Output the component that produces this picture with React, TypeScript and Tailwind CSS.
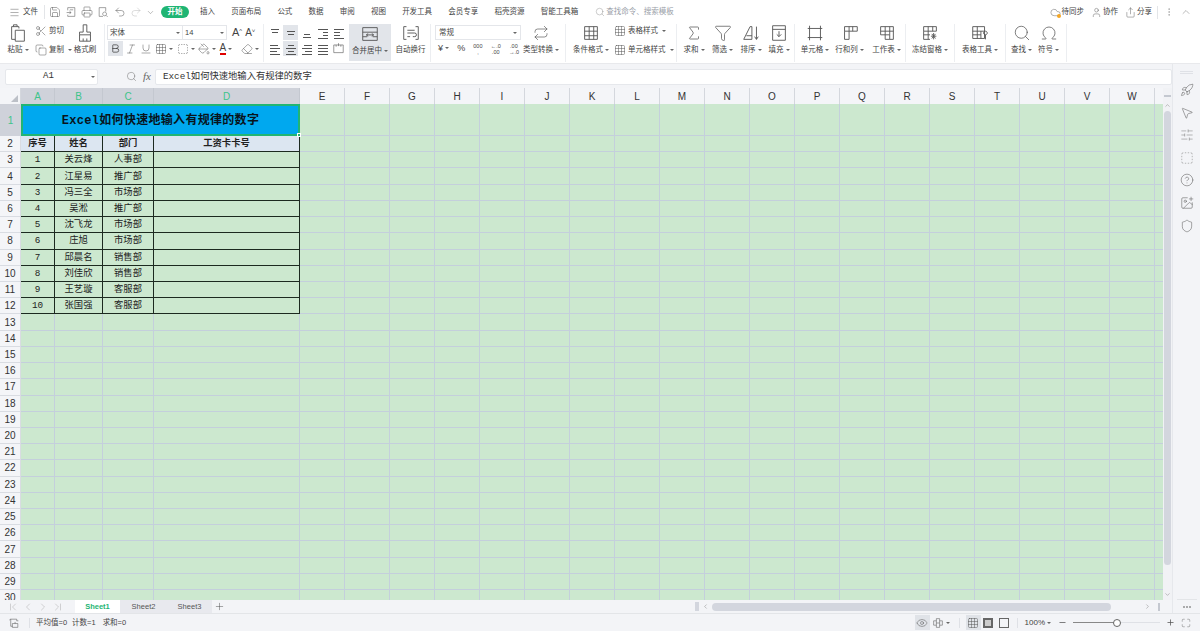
import {
  Bold,
  ChevronDown,
  ChevronFirst,
  ChevronLast,
  ChevronLeft,
  ChevronRight,
  ChevronUp,
  CircleHelp,
  Cloud,
  Copy,
  Eraser,
  Eye,
  Filter,
  Grid3x3,
  ImagePlus,
  Italic,
  Maximize,
  Menu,
  Minus,
  MoreVertical,
  MousePointer2,
  Omega,
  PaintBucket,
  Plus,
  Printer,
  Redo2,
  Repeat,
  Rocket,
  Save,
  Scissors,
  Search,
  Shield,
  Sigma,
  SlidersHorizontal,
  SquareDashed,
  Underline,
  Undo2,
  User,
  Share,
} from "lucide-react";
import type { ReactNode } from "react";

const cjk = "font-['Liberation_Sans','Noto_Sans_CJK_SC',sans-serif]";
const cellFont = "font-['Liberation_Mono','Noto_Sans_CJK_SC',monospace]";

const tabs = ["插入", "页面布局", "公式", "数据", "审阅", "视图", "开发工具", "会员专享", "稻壳资源", "智能工具箱"];
const people = [
  ["1", "关云烽", "人事部"],
  ["2", "江星易", "推广部"],
  ["3", "冯三全", "市场部"],
  ["4", "吴淞", "推广部"],
  ["5", "沈飞龙", "市场部"],
  ["6", "庄旭", "市场部"],
  ["7", "邱晨名", "销售部"],
  ["8", "刘佳欣", "销售部"],
  ["9", "王艺璇", "客服部"],
  ["10", "张国强", "客服部"],
];
const freeCols = "EFGHIJKLMNOPQRSTUVW".split("");
const emptyRows = Array.from({ length: 18 }, (_, i) => i + 13);

// 对齐按钮用的几条横线
function Lines({ rows }: { rows: [number, number, number][] }) {
  return (
    <svg width="14" height="14" viewBox="0 0 14 14" stroke="#555" strokeWidth="1" fill="none">
      {rows.map(([y, a, b]) => (
        <path key={y} d={`M${a} ${y}.5H${b}`} />
      ))}
    </svg>
  );
}

// 表格类图标
function TableIcon({ size = 20, d }: { size?: number; d: string }) {
  return (
    <svg width={size} height={size} viewBox="0 0 22 22" stroke="#555" strokeWidth="1" fill="none">
      <path d={d} />
    </svg>
  );
}

function Caret() {
  return <span className="ml-[2px] inline-block h-0 w-0 border-x-[2px] border-t-[2px] border-x-transparent border-t-[#666] align-middle" />;
}

function Big({ icon, label, className, active, noCaret }: { icon: ReactNode; label: string; className: string; active?: boolean; noCaret?: boolean }) {
  return (
    <div className={`flex h-[37px] shrink-0 flex-col items-center ${active ? "bg-[#e2e5ea]" : ""} ${className}`}>
      <div className="flex h-[18px] items-center">{icon}</div>
      <div className="mt-[1px] flex h-[14px] items-center whitespace-nowrap text-[7.5px]">
        {label}
        {!noCaret && <Caret />}
      </div>
    </div>
  );
}

function Sep() {
  return <div className="h-[38px] w-px shrink-0 bg-[#eceef1]" />;
}

function IconBtn({ children, active }: { children: ReactNode; active?: boolean }) {
  return <div className={`flex h-[15px] w-[15px] items-center justify-center ${active ? "bg-[#e2e5ea]" : ""}`}>{children}</div>;
}

function Stacked({ top, bottom }: { top: string; bottom: string }) {
  return (
    <span className="flex flex-col items-center font-['Liberation_Sans',sans-serif] text-[5.5px] leading-[6px]">
      <span>{top}</span>
      <span>{bottom}</span>
    </span>
  );
}

const ico = { size: 12, strokeWidth: 1, color: "#555" };

function TitleBar() {
  return (
    <div className="flex h-[24px] items-center bg-white text-[7.5px] text-[#444]">
      <Menu size={11} strokeWidth={1} className="ml-[9px]" color="#555" />
      <span className="ml-[3px] w-[16px]">文件</span>
      <div className="ml-[5px] h-[14px] w-px bg-[#e3e5e8]" />
      <div className="ml-[3px] flex w-[108px] items-center justify-between px-[1px]">
        <Save {...ico} />
        <TableIcon size={12} d="M5 8V3h13v16H5v-3M3 12h8M8 9l3 3-3 3M9 7h6" />
        <Printer {...ico} />
        <TableIcon size={12} d="M16 10V3H4v16h7M14 11a3.500 3.500 0 1 1-.1 0M16.500 17l3 3" />
        <Undo2 {...ico} />
        <Redo2 {...ico} color="#bbb" />
        <ChevronDown size={9} strokeWidth={1} color="#555" />
      </div>
      <div className="ml-[5px] flex h-[12px] w-[28px] items-center justify-center rounded-full bg-[#1fb573] text-[7.5px] font-bold text-white">开始</div>
      <div className="ml-[11px] flex gap-[16.2px]">
        {tabs.map((t) => (
          <span key={t} className="whitespace-nowrap">{t}</span>
        ))}
      </div>
      <div className="ml-[17px] flex items-center gap-[1px] text-[#9aa0a8]">
        <Search size={10} strokeWidth={1} color="#888" />
        查找命令、搜索模板
      </div>
      <div className="ml-auto flex items-center">
        <div className="flex items-center gap-[1px]">
          <div className="relative">
            <Cloud size={11} strokeWidth={1} color="#555" />
            <div className="absolute right-0 bottom-0 h-[4px] w-[4px] rounded-full bg-[#f5a623]" />
          </div>
          待同步
        </div>
        <div className="ml-[7px] flex items-center gap-[1px]">
          <User size={11} strokeWidth={1} color="#555" />
          协作
        </div>
        <div className="ml-[7px] flex items-center gap-[1px]">
          <Share size={11} strokeWidth={1} color="#555" />
          分享
        </div>
        <div className="ml-[5px] h-[13px] w-px bg-[#e3e5e8]" />
        <MoreVertical size={10} strokeWidth={1} className="ml-[6px]" color="#777" />
        <ChevronUp size={12} strokeWidth={1} className="ml-[6px] mr-[8px]" color="#777" />
      </div>
    </div>
  );
}

function Ribbon() {
  return (
    <div className="flex h-[40px] items-start border-b border-[#e8e9ec] bg-white text-[7.5px] text-[#444]">
      {/* 剪贴板 */}
      <Big className="ml-[8px] w-[20px]" icon={<TableIcon d="M12 6V4H4v14h4M6 4V2h4v2M8 8h10v12H8z" />} label="粘贴" />
      <div className="ml-[7px] flex h-[33px] w-[34px] shrink-0 flex-col justify-between whitespace-nowrap py-[1px]">
        <div className="flex items-center gap-[2px]"><Scissors size={12} strokeWidth={1} color="#555" className="shrink-0" />剪切</div>
        <div className="flex items-center gap-[2px]"><Copy size={12} strokeWidth={1} color="#555" className="shrink-0" />复制<Caret /></div>
      </div>
      <Big className="ml-[2px] w-[28px]" noCaret icon={<TableIcon d="M9 2h4v8h4v3H5v-3h4zM5 13v7h12v-7M9 20v-3M13 20v-3" />} label="格式刷" />
      <div className="ml-[5px]"><Sep /></div>

      {/* 字体 */}
      <div className="ml-[2px] flex w-[156px] shrink-0 flex-col">
        <div className="flex h-[17px] items-center">
          <div className="flex h-[15px] w-[76px] items-center justify-between border border-[#e4e6ea] px-[2px]">宋体<Caret /></div>
          <div className="flex h-[15px] w-[44px] items-center justify-between border border-l-0 border-[#e4e6ea] px-[2px]">14<Caret /></div>
          <span className="ml-[5px] text-[11px]">A<sup className="text-[6px]">^</sup></span>
          <span className="ml-[3px] text-[10px]">A<sup className="text-[6px]">˅</sup></span>
        </div>
        <div className="flex items-center pl-[1px]">
          <IconBtn active><Bold size={11} strokeWidth={1.5} color="#333" /></IconBtn>
          <IconBtn><Italic {...ico} /></IconBtn>
          <IconBtn><Underline {...ico} /></IconBtn>
          <div className="ml-[2px] flex w-[21.5px] items-center"><Grid3x3 {...ico} /><Caret /></div>
          <div className="flex w-[21.5px] items-center"><SquareDashed {...ico} /><Caret /></div>
          <div className="flex w-[21.5px] items-center"><PaintBucket {...ico} /><Caret /></div>
          <div className="flex w-[21.5px] items-center">
            <span className="border-b-2 border-[#e00000] text-[10px] leading-[11px]">A</span>
            <Caret />
          </div>
          <div className="flex items-center"><Eraser {...ico} /><Caret /></div>
        </div>
      </div>
      <Sep />

      {/* 对齐 */}
      <div className="ml-[3px] grid w-[80px] shrink-0 grid-cols-5 gap-y-[1px] pt-[1px]">
        <IconBtn><Lines rows={[[3, 3, 11], [6, 4, 10]]} /></IconBtn>
        <IconBtn active><Lines rows={[[5, 3, 11], [8, 4, 10]]} /></IconBtn>
        <IconBtn><Lines rows={[[8, 4, 10], [11, 3, 11]]} /></IconBtn>
        <IconBtn><Lines rows={[[3, 2, 12], [6, 7, 12], [9, 7, 12], [12, 2, 12]]} /></IconBtn>
        <IconBtn><Lines rows={[[3, 2, 12], [6, 2, 8], [9, 2, 8], [12, 2, 12]]} /></IconBtn>
        <IconBtn><Lines rows={[[3, 2, 10], [6, 2, 12], [9, 2, 9], [12, 2, 12]]} /></IconBtn>
        <IconBtn active><Lines rows={[[3, 4, 10], [6, 2, 12], [9, 4, 10], [12, 2, 12]]} /></IconBtn>
        <IconBtn><Lines rows={[[3, 4, 12], [6, 2, 12], [9, 5, 12], [12, 2, 12]]} /></IconBtn>
        <IconBtn><Lines rows={[[3, 2, 12], [6, 2, 12], [9, 2, 12], [12, 2, 12]]} /></IconBtn>
        <IconBtn><TableIcon size={13} d="M3 5h16v13H3zM11 2v5M7 5v3M15 5v3" /></IconBtn>
      </div>
      <Big
        active
        className="ml-[2px] w-[42px] pt-[1px]"
        label="合并居中"
        icon={<TableIcon d="M3 4h16v14H3zM3 9h16M3 14h5M14 14h5M7 12h8M7 12l2-1.500M7 12l2 1.500M15 12l-2-1.500M15 12l-2 1.500" />}
      />
      <Big
        className="w-[39px]"
        noCaret
        label="自动换行"
        icon={<TableIcon d="M6 4H3v14h3M16 4h3v14h-3M7 8h8M7 11h8a2 2 0 0 1 0 4h-2M7 15h3" />}
      />
      <Sep />

      {/* 数字 */}
      <div className="ml-[4px] flex w-[87px] shrink-0 flex-col gap-[1px] pt-[1px]">
        <div className="flex h-[15px] w-[86px] items-center justify-between border border-[#e4e6ea] px-[3px]">常规<Caret /></div>
        <div className="flex h-[15px] items-center justify-between pr-[3px] text-[9px]">
          <span className="ml-[3px]">¥<Caret /></span>
          <span>%</span>
          <Stacked top="000" bottom="," />
          <Stacked top="←.0" bottom=".00" />
          <Stacked top=".00" bottom="→.0" />
        </div>
      </div>
      <Big className="w-[38px]" icon={<Repeat size={16} strokeWidth={1} color="#555" />} label="类型转换" />
      <div className="ml-[5px]"><Sep /></div>

      {/* 样式 */}
      <Big
        className="ml-[4px] w-[42px]"
        label="条件格式"
        icon={<TableIcon d="M4 4h14v14H4zM4 9h14M4 14h14M9 4v14M14 4v14" />}
      />
      <div className="ml-[2px] flex h-[33px] w-[62px] shrink-0 flex-col justify-between py-[1px]">
        <div className="flex items-center gap-[2px] whitespace-nowrap"><Grid3x3 {...ico} />表格样式<Caret /></div>
        <div className="flex items-center gap-[2px] whitespace-nowrap"><Grid3x3 {...ico} />单元格样式<Caret /></div>
      </div>
      <Sep />

      {/* 编辑 */}
      <Big className="ml-[3px] w-[28px]" icon={<Sigma size={18} strokeWidth={1} color="#555" />} label="求和" />
      <Big className="w-[29px]" icon={<Filter size={18} strokeWidth={1} color="#555" />} label="筛选" />
      <Big className="w-[28px]" icon={<TableIcon d="M3 18 10 4h2v14zM6 14h6M17 4v14M15 15l2 3 2-3" />} label="排序" />
      <Big className="w-[28px]" icon={<TableIcon d="M4 3h14v16H4zM4 7h14M11 9v6M8.500 12.500 11 15l2.500-2.500" />} label="填充" />
      <div className="ml-[1px]"><Sep /></div>

      <Big className="ml-[3px] w-[34px]" icon={<TableIcon d="M5 3v16M17 3v16M3 6h16M3 16h16" />} label="单元格" />
      <Big className="w-[35px]" icon={<TableIcon d="M5 4h14v5H5zM5 9v9h5V9M10 4v5M14 4v5" />} label="行和列" />
      <Big className="ml-[1px] w-[37px]" icon={<TableIcon d="M4 4h14v14h-4M4 4v9h10v5H9v-5M4 9h14M9 4v9M14 4v9" />} label="工作表" />
      <Sep />

      <Big className="ml-[1px] w-[46px]" icon={<TableIcon d="M4 4h14v5H4zM4 9v9h7M4 13h7M9 4v14M14 4v5M15 11v7M12 14.500h6M13 12l4 5M17 12l-4 5" />} label="冻结窗格" />
      <div className="ml-[1px]"><Sep /></div>
      <Big className="ml-[3px] w-[44px]" icon={<TableIcon d="M3 4h13v13H3zM3 9h13M3 13h9M8 4v13M12 9v8M17 9a2 2 0 1 1-.1 0M17 13v5" />} label="表格工具" />
      <div className="ml-[3px]"><Sep /></div>

      <Big className="ml-[2px] w-[27px]" icon={<Search size={18} strokeWidth={1} color="#555" />} label="查找" />
      <Big className="w-[27px]" icon={<Omega size={18} strokeWidth={1} color="#555" />} label="符号" />
      <div className="ml-[4px]"><Sep /></div>
    </div>
  );
}

function FormulaBar() {
  return (
    <div className="flex h-[24px] items-center bg-[#f3f4f7] pt-[1px]">
      <div className={`ml-[5px] flex h-[16px] w-[93px] items-center justify-between rounded-[2px] border border-[#e6e8ec] bg-white pr-[2px] pl-[37px] text-[9px] text-[#333] ${cellFont}`}>
        A1
        <Caret />
      </div>
      <Search size={11} strokeWidth={1} color="#666" className="ml-[28px]" />
      <span className="ml-[6px] font-['Liberation_Serif',serif] text-[11px] text-[#666] italic">fx</span>
      <div className={`ml-[4px] flex h-[16px] flex-1 items-center rounded-[2px] border border-[#e6e8ec] bg-white pl-[7px] text-[9.3px] text-[#333] ${cellFont}`}>
        Excel如何快速地输入有规律的数字
      </div>
    </div>
  );
}

function ColHeader() {
  const sel = "flex items-center justify-center border-r border-[#c4c8d0] bg-[#cfd2da] text-[#3cc48a]";
  return (
    <div className="flex h-[16px] bg-[#f4f5f8] font-['Liberation_Sans',sans-serif] text-[10px] text-[#333]">
      <div className="flex w-[21px] items-end justify-end border-r border-[#d4d7dd] p-[2px]">
        <div className="h-0 w-0 border-b-[7px] border-l-[7px] border-b-[#bcc0c7] border-l-transparent" />
      </div>
      <div className={`w-[34px] ${sel}`}>A</div>
      <div className={`w-[48px] ${sel}`}>B</div>
      <div className={`w-[51px] ${sel}`}>C</div>
      <div className={`w-[146px] ${sel}`}>D</div>
      {freeCols.map((c) => (
        <div key={c} className="flex w-[45px] items-center justify-center border-r border-[#d4d7dd]">{c}</div>
      ))}
      <div className="flex-1" />
    </div>
  );
}

const rowNum = "flex w-[21px] shrink-0 items-center justify-center border-b border-r border-[#d9dce2] bg-[#f4f5f8] font-['Liberation_Sans',sans-serif] text-[10px] text-[#333]";
const gridCell = "h-full w-[45px] shrink-0 border-b border-r border-[#c4cfdc]";
const tableCell = "flex h-full shrink-0 items-center justify-center border-b border-r border-[#1c2a20] pt-[1px] text-[9.3px] text-[#222]";

function FreeCells() {
  return (
    <>
      {freeCols.map((c) => (
        <div key={c} className={gridCell} />
      ))}
      <div className="h-full flex-1 border-b border-[#c4cfdc]" />
    </>
  );
}

function Sheet() {
  return (
    <div className="relative h-[496px] overflow-hidden bg-[#cce8cf]">
      <div className={cellFont}>
        <div className="flex h-[32px]">
          <div className="flex w-[21px] shrink-0 items-center justify-center bg-[#cfd2da] font-['Liberation_Sans',sans-serif] text-[10px] text-[#3cc48a]">1</div>
          <div className="relative flex h-full w-[279px] shrink-0 items-center justify-center border-2 border-[#21b573] bg-[#00a8ef] pt-[2px] text-[12px] font-bold tracking-[0.3px] text-[#08141c]">
            Excel如何快速地输入有规律的数字
            <div className="absolute -right-[3px] -bottom-[3px] h-[4px] w-[4px] border border-white bg-[#21b573]" />
          </div>
          <FreeCells />
        </div>
        <div className="flex h-[16.23px]">
          <div className={rowNum}>2</div>
          <div className={`${tableCell} w-[34px] bg-[#dce6f1] font-bold`}>序号</div>
          <div className={`${tableCell} w-[48px] bg-[#dce6f1] font-bold`}>姓名</div>
          <div className={`${tableCell} w-[51px] bg-[#dce6f1] font-bold`}>部门</div>
          <div className={`${tableCell} w-[146px] bg-[#dce6f1] font-bold`}>工资卡卡号</div>
          <FreeCells />
        </div>
        {people.map(([no, name, dept], i) => (
          <div key={no} className="flex h-[16.23px]">
            <div className={rowNum}>{i + 3}</div>
            <div className={`${tableCell} w-[34px]`}>{no}</div>
            <div className={`${tableCell} w-[48px]`}>{name}</div>
            <div className={`${tableCell} w-[51px]`}>{dept}</div>
            <div className={`${tableCell} w-[146px]`} />
            <FreeCells />
          </div>
        ))}
        {emptyRows.map((n) => (
          <div key={n} className="flex h-[16.23px]">
            <div className={rowNum}>{n}</div>
            <div className={`${gridCell} !w-[34px]`} />
            <div className={`${gridCell} !w-[48px]`} />
            <div className={`${gridCell} !w-[51px]`} />
            <div className={`${gridCell} !w-[146px]`} />
            <FreeCells />
          </div>
        ))}
      </div>
    </div>
  );
}

function VScroll() {
  return (
    <div className="flex w-[9px] shrink-0 flex-col items-center bg-[#f1f2f5]">
      <div className="mt-[7px] h-[2px] w-[7px] bg-[#c4c8d0]" />
      <ChevronUp size={7} strokeWidth={1.5} className="mt-[5px]" color="#777" />
      <div className="mt-[2px] h-[454px] w-[7px] rounded-full bg-[#d3d6de]" />
      <ChevronDown size={7} strokeWidth={1.5} className="mt-auto mb-[2px]" color="#777" />
    </div>
  );
}

function TabsRow() {
  return (
    <div className="flex h-[13px] items-center bg-[#f3f4f7] font-['Liberation_Sans',sans-serif] text-[7.5px] text-[#555]">
      <div className="ml-[7px] flex w-[64px] items-center gap-[3px]">
        <ChevronFirst size={12} strokeWidth={1} color="#aaa" />
        <ChevronLeft size={12} strokeWidth={1} color="#aaa" />
        <ChevronRight size={12} strokeWidth={1} color="#aaa" />
        <ChevronLast size={12} strokeWidth={1} color="#aaa" />
      </div>
      <div className="ml-[4px] flex h-full w-[45px] items-center justify-center bg-white font-bold text-[#1fb573]">Sheet1</div>
      <div className="flex h-full w-[47px] items-center justify-center bg-[#e8e9ee]">Sheet2</div>
      <div className="flex h-full w-[45px] items-center justify-center bg-[#e8e9ee]">Sheet3</div>
      <Plus size={11} strokeWidth={1} color="#444" className="ml-[2px]" />
      <div className="ml-auto flex h-full w-[477px] items-center">
        <div className="h-[9px] w-[4px] bg-[#d3d6de]" />
        <ChevronLeft size={7} strokeWidth={1.5} color="#777" className="ml-[3px]" />
        <div className="ml-[3px] h-[8px] w-[399px] rounded-full bg-[#d3d6de]" />
        <ChevronRight size={7} strokeWidth={1.5} color="#777" className="ml-[33px]" />
        <div className="ml-[7px] h-[8px] w-[2px] bg-[#c4c8d0]" />
      </div>
    </div>
  );
}

function RightPanel() {
  return (
    <div className="flex w-[28px] shrink-0 flex-col items-center border-l border-[#e6e8ec] bg-[#f3f4f7]">
      <div className="mt-[7px] h-[3px] w-[13px] border-y border-[#dfe1e6]" />
      <div className="mt-[9px] flex flex-col items-center gap-[8.6px]">
        <Rocket size={14} strokeWidth={1} color="#666" />
        <MousePointer2 size={14} strokeWidth={1} color="#666" />
        <SlidersHorizontal size={14} strokeWidth={1} color="#888" />
        <SquareDashed size={14} strokeWidth={1} color="#888" />
        <CircleHelp size={14} strokeWidth={1} color="#666" />
        <ImagePlus size={14} strokeWidth={1} color="#666" />
        <Shield size={14} strokeWidth={1} color="#666" />
      </div>
      <div className="mt-auto h-px w-[20px] bg-[#e3e5e8]" />
      <div className="mt-[6px] mb-[5px] flex gap-[1px]">
        <div className="h-[2px] w-[2px] rounded-full border border-[#777]" />
        <div className="h-[2px] w-[2px] rounded-full border border-[#777]" />
        <div className="h-[2px] w-[2px] rounded-full border border-[#777]" />
      </div>
    </div>
  );
}

function StatusBar() {
  return (
    <div className="flex h-[18px] items-center border-t border-[#e3e5e8] bg-[#f3f4f7] text-[7.5px] text-[#444]">
      <div className="ml-[8px]"><TableIcon size={12} d="M5 4h11v3h3M5 4v13h3M5 4a2 2 0 0 0-2 2M8 12h10v7H8zM13 9v3" /></div>
      <div className="ml-[9px] h-[10px] w-px bg-[#dfe1e6]" />
      <span className="ml-[6px]">平均值=0</span>
      <span className="ml-[5px]">计数=1</span>
      <span className="ml-[7px]">求和=0</span>
      <div className="ml-auto flex items-center">
        <div className="flex h-[15px] w-[15px] items-center justify-center bg-[#e0e3e8]"><Eye size={12} strokeWidth={1} color="#555" /></div>
        <div className="ml-[2px]"><TableIcon size={12} d="M8 7H3v8h5M14 7h5v8h-5M8 3h6v16H8zM8 11h6" /></div>
        <Caret />
        <div className="ml-[9px] h-[10px] w-px bg-[#dfe1e6]" />
        <div className="ml-[6px] flex h-[15px] w-[15px] items-center justify-center bg-[#e0e3e8]"><Grid3x3 size={12} strokeWidth={1} color="#555" /></div>
        <div className="ml-[2px] h-[10px] w-[10px] border-2 border-[#666] bg-[#ccc]" />
        <div className="ml-[6px] h-[10px] w-[10px] border border-[#666]" />
        <div className="ml-[8px] h-[10px] w-px bg-[#dfe1e6]" />
        <span className="ml-[7px] font-['Liberation_Sans',sans-serif] text-[8px]">100%</span>
        <Caret />
        <Minus size={9} strokeWidth={2} color="#555" className="ml-[7px]" />
        <div className="relative ml-[6px] h-[1px] w-[87px] bg-[#dfe1e6]">
          <div className="h-full w-[43px] bg-[#888]" />
          <div className="absolute top-[-3.5px] left-[40px] h-[8px] w-[8px] rounded-full border border-[#666] bg-white" />
        </div>
        <Plus size={9} strokeWidth={2} color="#555" className="ml-[6px]" />
        <Maximize size={10} strokeWidth={1} color="#555" className="ml-[6px] mr-[9px]" />
      </div>
    </div>
  );
}

export default function App() {
  return (
    <div className={`flex h-[631px] w-[1200px] flex-col overflow-hidden bg-white ${cjk}`}>
      <TitleBar />
      <Ribbon />
      <div className="flex h-[549px]">
        <div className="flex min-w-0 flex-1 flex-col">
          <FormulaBar />
          <div className="flex">
            <div className="min-w-0 flex-1">
              <ColHeader />
              <Sheet />
            </div>
            <VScroll />
          </div>
          <TabsRow />
        </div>
        <RightPanel />
      </div>
      <StatusBar />
    </div>
  );
}
